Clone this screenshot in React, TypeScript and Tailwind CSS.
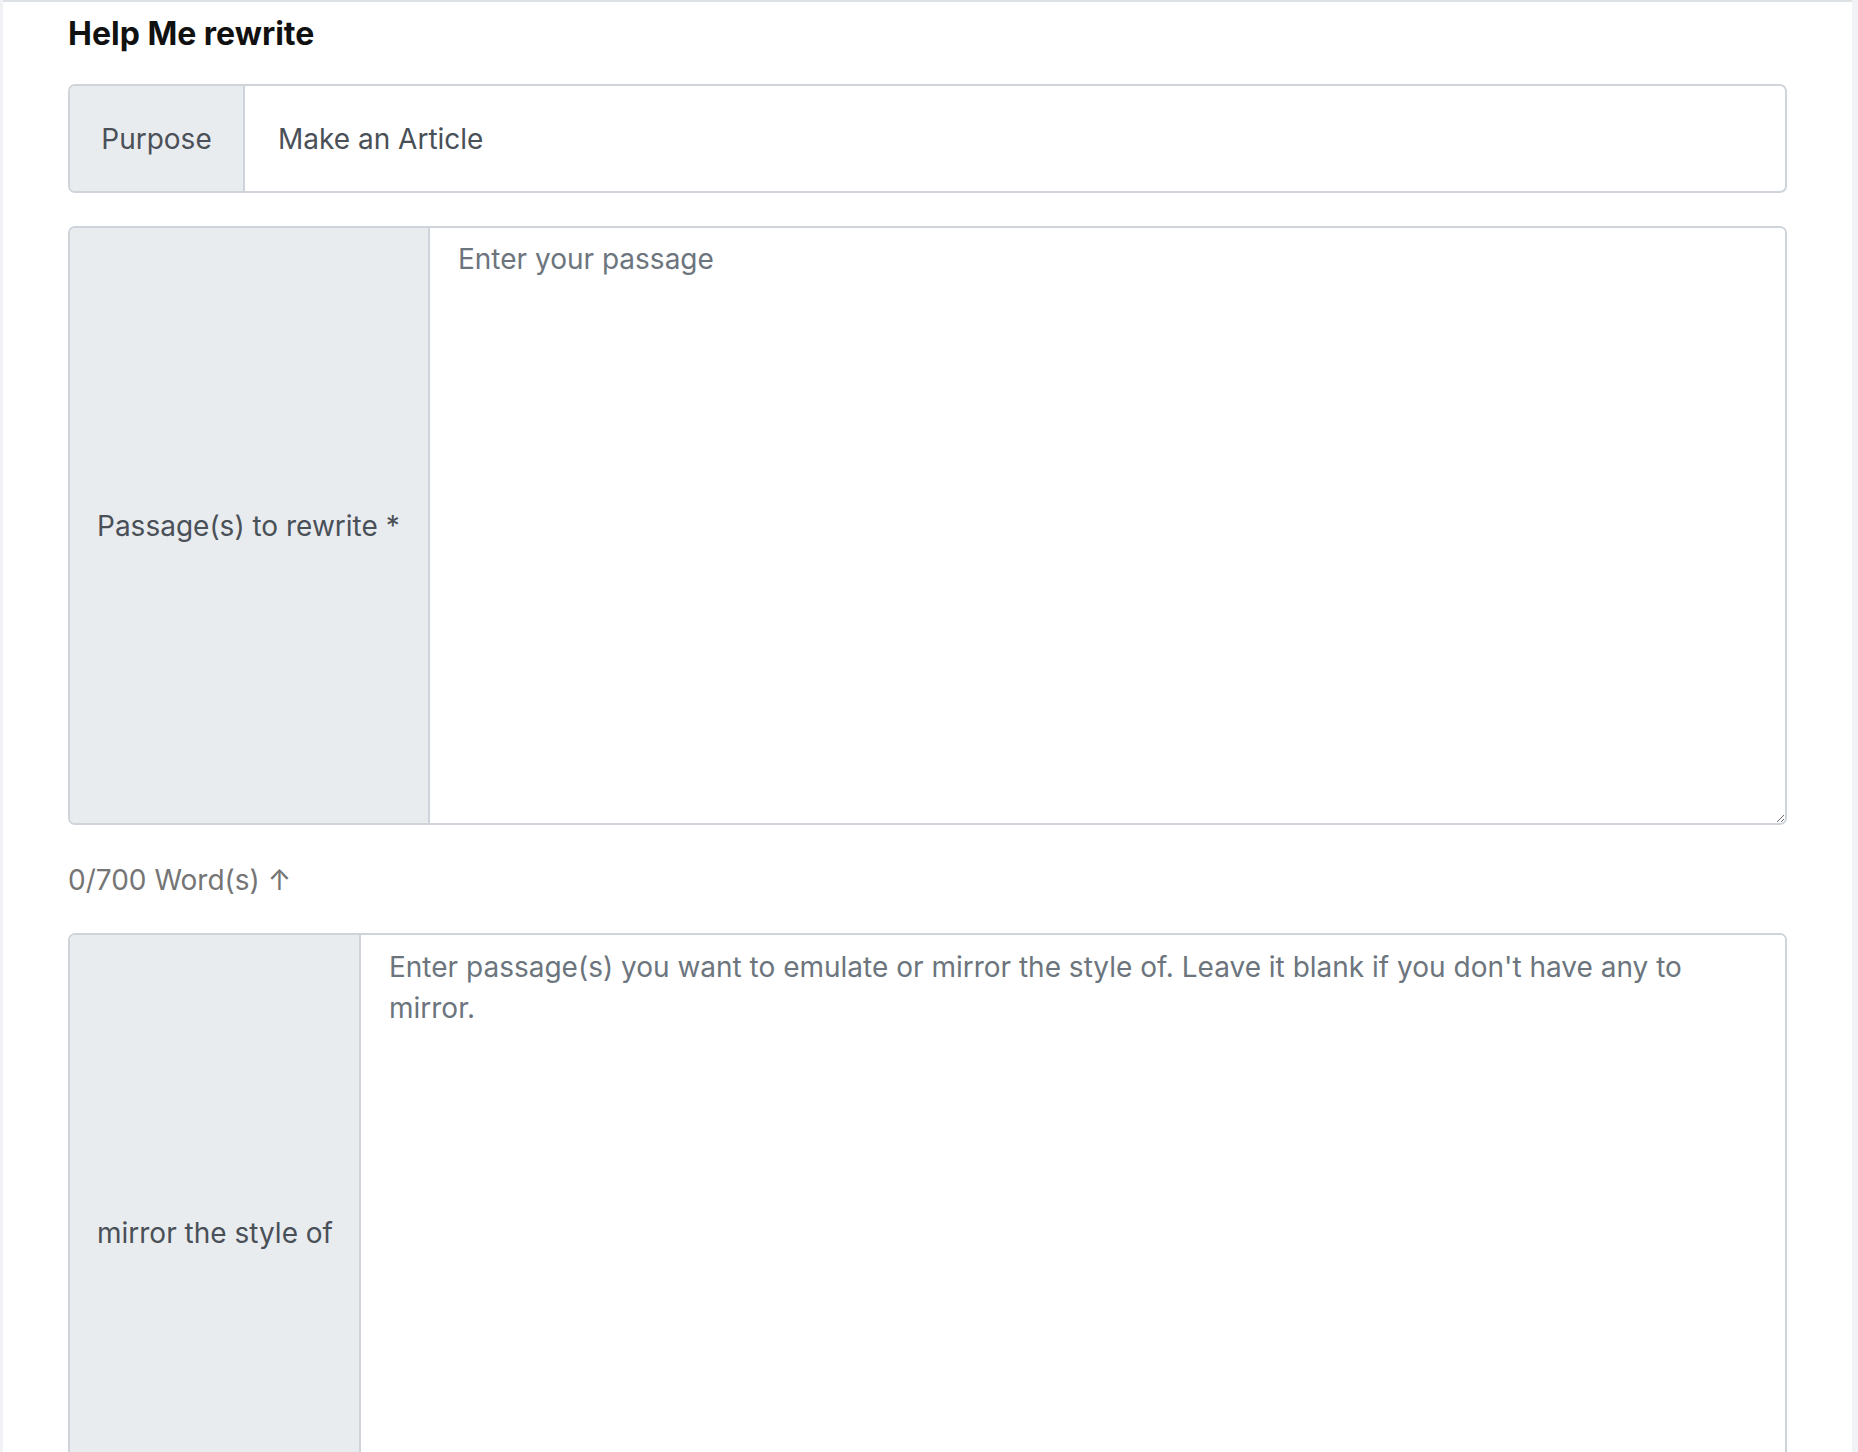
import { useState } from 'react';

const MAX_WORDS = 700;

function countWords(text: string) {
    const trimmed = text.trim();
    return trimmed ? trimmed.split(/\s+/).length : 0;
}

export default function App() {
    const [passage, setPassage] = useState('');
    const [mirror, setMirror] = useState('');

    return (
        <div className="min-h-screen bg-[#f1f2f6] pl-[3px] pr-[6px] font-['Inter','Noto_Sans',sans-serif]">
            <div className="min-h-screen bg-white border-t-2 border-[#dde0e4] px-[65px] pt-[12px] pb-16">
                <h1 className="text-[32px] leading-[40px] font-bold text-[#111]">Help Me rewrite</h1>

                {/* Purpose */}
                <div className="mt-[30px] flex h-[109px] border-2 border-[#ced4da] rounded-[7px] overflow-hidden text-[28px] leading-[41.5px] text-[#495057]">
                    <div className="w-[175px] shrink-0 flex items-center justify-center pt-[3px] bg-[#e9ecef] border-r-2 border-[#ced4da]">
                        Purpose
                    </div>
                    <div className="flex-1 flex items-center pt-[3px] pl-[33px]">Make an Article</div>
                </div>

                {/* Passage */}
                <div className="mt-[33px] flex h-[599px] border-2 border-[#ced4da] rounded-[7px] overflow-hidden text-[28px] leading-[41.5px] text-[#495057]">
                    <div className="w-[360px] shrink-0 flex items-center pt-[3px] pl-[27px] bg-[#e9ecef] border-r-2 border-[#ced4da]">
                        Passage(s) to rewrite *
                    </div>
                    <textarea
                        value={passage}
                        onChange={(e) => setPassage(e.target.value)}
                        placeholder="Enter your passage"
                        className="flex-1 resize-y bg-white px-[28px] pt-[11px] pb-2 text-[28px] leading-[41.5px] text-[#495057] placeholder:text-[#6c757d] focus:outline-none"
                    />
                </div>

                <div className="mt-[35px] text-[28px] leading-[41.5px] text-[#757575]">
                    {countWords(passage)}/{MAX_WORDS} Word(s) ↑
                </div>

                {/* Mirror style */}
                <div className="mt-[31px] flex h-[599px] border-2 border-[#ced4da] rounded-[7px] overflow-hidden text-[28px] leading-[41.5px] text-[#495057]">
                    <div className="w-[291px] shrink-0 flex items-center pt-[3px] pl-[27px] bg-[#e9ecef] border-r-2 border-[#ced4da]">
                        mirror the style of
                    </div>
                    <textarea
                        value={mirror}
                        onChange={(e) => setMirror(e.target.value)}
                        placeholder="Enter passage(s) you want to emulate or mirror the style of. Leave it blank if you don't have any to mirror."
                        className="flex-1 resize-y bg-white px-[28px] pt-[12px] pb-2 text-[28px] leading-[41.5px] text-[#495057] placeholder:text-[#6c757d] focus:outline-none"
                    />
                </div>
            </div>
        </div>
    );
}
